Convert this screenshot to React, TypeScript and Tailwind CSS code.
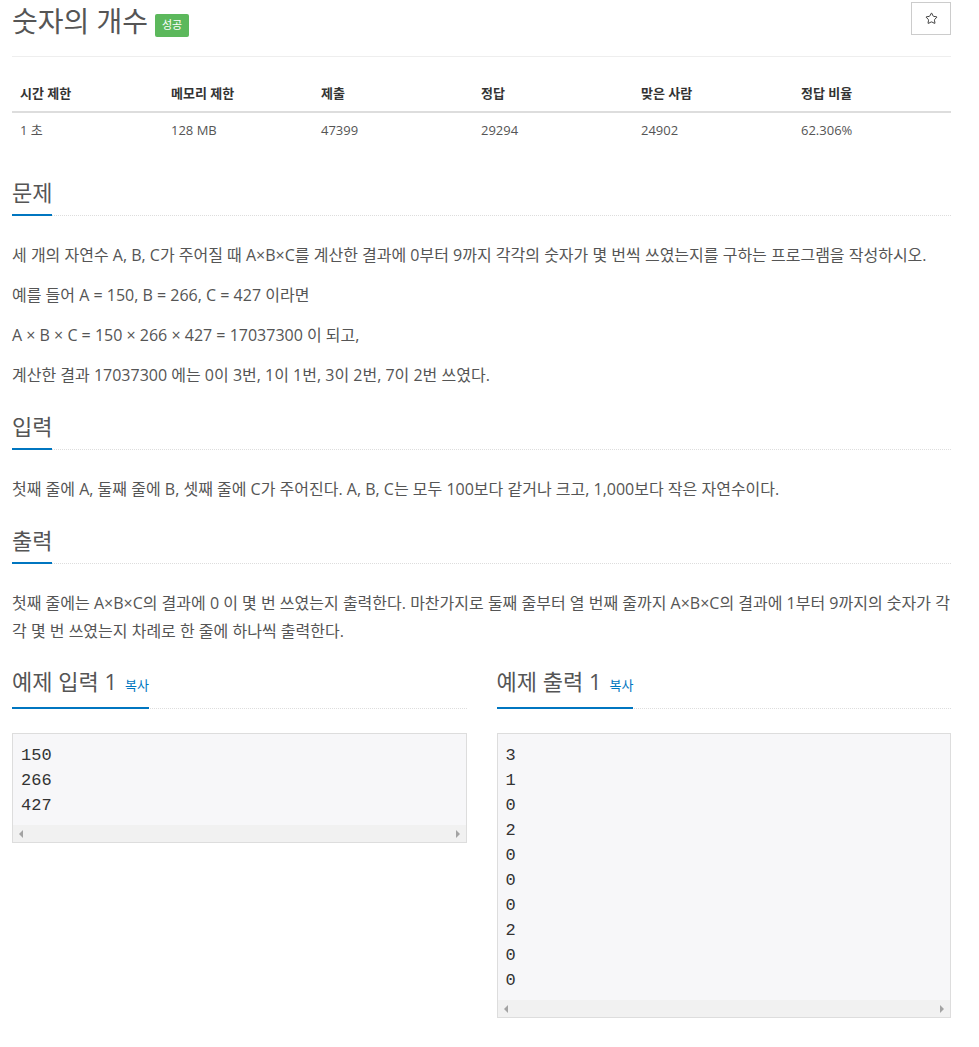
import { Star } from 'lucide-react';

const font = { fontFamily: '"Open Sans", "Noto Sans CJK KR", sans-serif' };

const stats = [
  { label: '시간 제한', value: '1 초', w: 'w-[151px]' },
  { label: '메모리 제한', value: '128 MB', w: 'w-[150px]' },
  { label: '제출', value: '47399', w: 'w-[160px]' },
  { label: '정답', value: '29294', w: 'w-[160px]' },
  { label: '맞은 사람', value: '24902', w: 'w-[160px]' },
  { label: '정답 비율', value: '62.306%', w: 'flex-1' },
];

function Heading({ title, copy, className = '' }: { title: string; copy?: boolean; className?: string }) {
  return (
    <div className={`border-b border-dotted border-[#ddd] ${className}`}>
      <span className="inline-block -mb-px border-b-2 border-[#0076c0] pb-[7px] text-[22px] leading-[30px] text-[#555]">
        {title}
        {copy && <span className="ml-2 text-[13px] text-[#0076c0]">복사</span>}
      </span>
    </div>
  );
}

function Sample({ lines }: { lines: string[] }) {
  return (
    <div className="mt-[24px] border border-[#ddd] bg-[#f7f7f9]">
      <pre
        className="px-[8px] pt-[9px] pb-[7px] text-[17px] leading-[25px] text-[#333]"
        style={{ fontFamily: '"Liberation Mono", monospace' }}
      >
        {lines.join('\n')}
      </pre>
      <div className="flex h-[17px] items-center justify-between bg-[#f1f1f1] px-[6px]">
        <span className="h-0 w-0 border-y-[4px] border-r-[4px] border-y-transparent border-r-[#a3a3a3]" />
        <span className="h-0 w-0 border-y-[4px] border-l-[4px] border-y-transparent border-l-[#a3a3a3]" />
      </div>
    </div>
  );
}

export default function App() {
  return (
    <div className="w-[979px] bg-white pl-[12px] pr-[28px]" style={font}>
      <div className="flex items-start justify-between border-b border-[#eee] pb-[14px]">
        <div className="flex items-center">
          <h1 className="text-[28px] leading-[42px] text-[#555]">숫자의 개수</h1>
          <span className="ml-[7px] mt-[8px] flex h-[23px] w-[34px] items-center justify-center rounded-[2px] bg-[#5cb85c] text-[11px] text-white">
            성공
          </span>
        </div>
        <button className="mt-[2px] flex h-[33px] w-[40px] items-center justify-center border border-[#ccc] bg-white">
          <Star size={13} strokeWidth={1.6} className="text-[#222]" />
        </button>
      </div>

      <div className="mt-[19px] text-[13px]">
        <div className="flex border-b-2 border-[#ddd]">
          {stats.map((s) => (
            <div key={s.label} className={`${s.w} px-[8px] py-[8px] font-bold leading-[19px] text-[#333]`}>
              {s.label}
            </div>
          ))}
        </div>
        <div className="flex">
          {stats.map((s) => (
            <div key={s.label} className={`${s.w} px-[8px] py-[8px] leading-[19px] text-[#555]`}>
              {s.value}
            </div>
          ))}
        </div>
      </div>

      <Heading title="문제" className="mt-[29px]" />
      <div className="mt-[25px] text-[16px] leading-[28px] text-[#555]">
        <p className="mb-[12px]">세 개의 자연수 A, B, C가 주어질 때 A×B×C를 계산한 결과에 0부터 9까지 각각의 숫자가 몇 번씩 쓰였는지를 구하는 프로그램을 작성하시오.</p>
        <p className="mb-[12px]">예를 들어 A = 150, B = 266, C = 427 이라면</p>
        <p className="mb-[12px]">A × B × C = 150 × 266 × 427 = 17037300 이 되고,</p>
        <p className="mb-[12px]">계산한 결과 17037300 에는 0이 3번, 1이 1번, 3이 2번, 7이 2번 쓰였다.</p>
      </div>

      <Heading title="입력" className="mt-[22px]" />
      <div className="mt-[25px] text-[16px] leading-[28px] text-[#555]">
        <p className="mb-[12px]">첫째 줄에 A, 둘째 줄에 B, 셋째 줄에 C가 주어진다. A, B, C는 모두 100보다 같거나 크고, 1,000보다 작은 자연수이다.</p>
      </div>

      <Heading title="출력" className="mt-[22px]" />
      <div className="mt-[25px] text-[16px] leading-[28px] text-[#555]">
        <p className="mb-[12px]">첫째 줄에는 A×B×C의 결과에 0 이 몇 번 쓰였는지 출력한다. 마찬가지로 둘째 줄부터 열 번째 줄까지 A×B×C의 결과에 1부터 9까지의 숫자가 각각 몇 번 쓰였는지 차례로 한 줄에 하나씩 출력한다.</p>
      </div>

      <div className="mt-[21px] grid grid-cols-2 items-start gap-[30px]">
        <div>
          <Heading title="예제 입력 1" copy />
          <Sample lines={['150', '266', '427']} />
        </div>
        <div>
          <Heading title="예제 출력 1" copy />
          <Sample lines={['3', '1', '0', '2', '0', '0', '0', '2', '0', '0']} />
        </div>
      </div>

      <Heading title="힌트" className="mt-[28px]" />
      <div className="h-[200px]" />
    </div>
  );
}
